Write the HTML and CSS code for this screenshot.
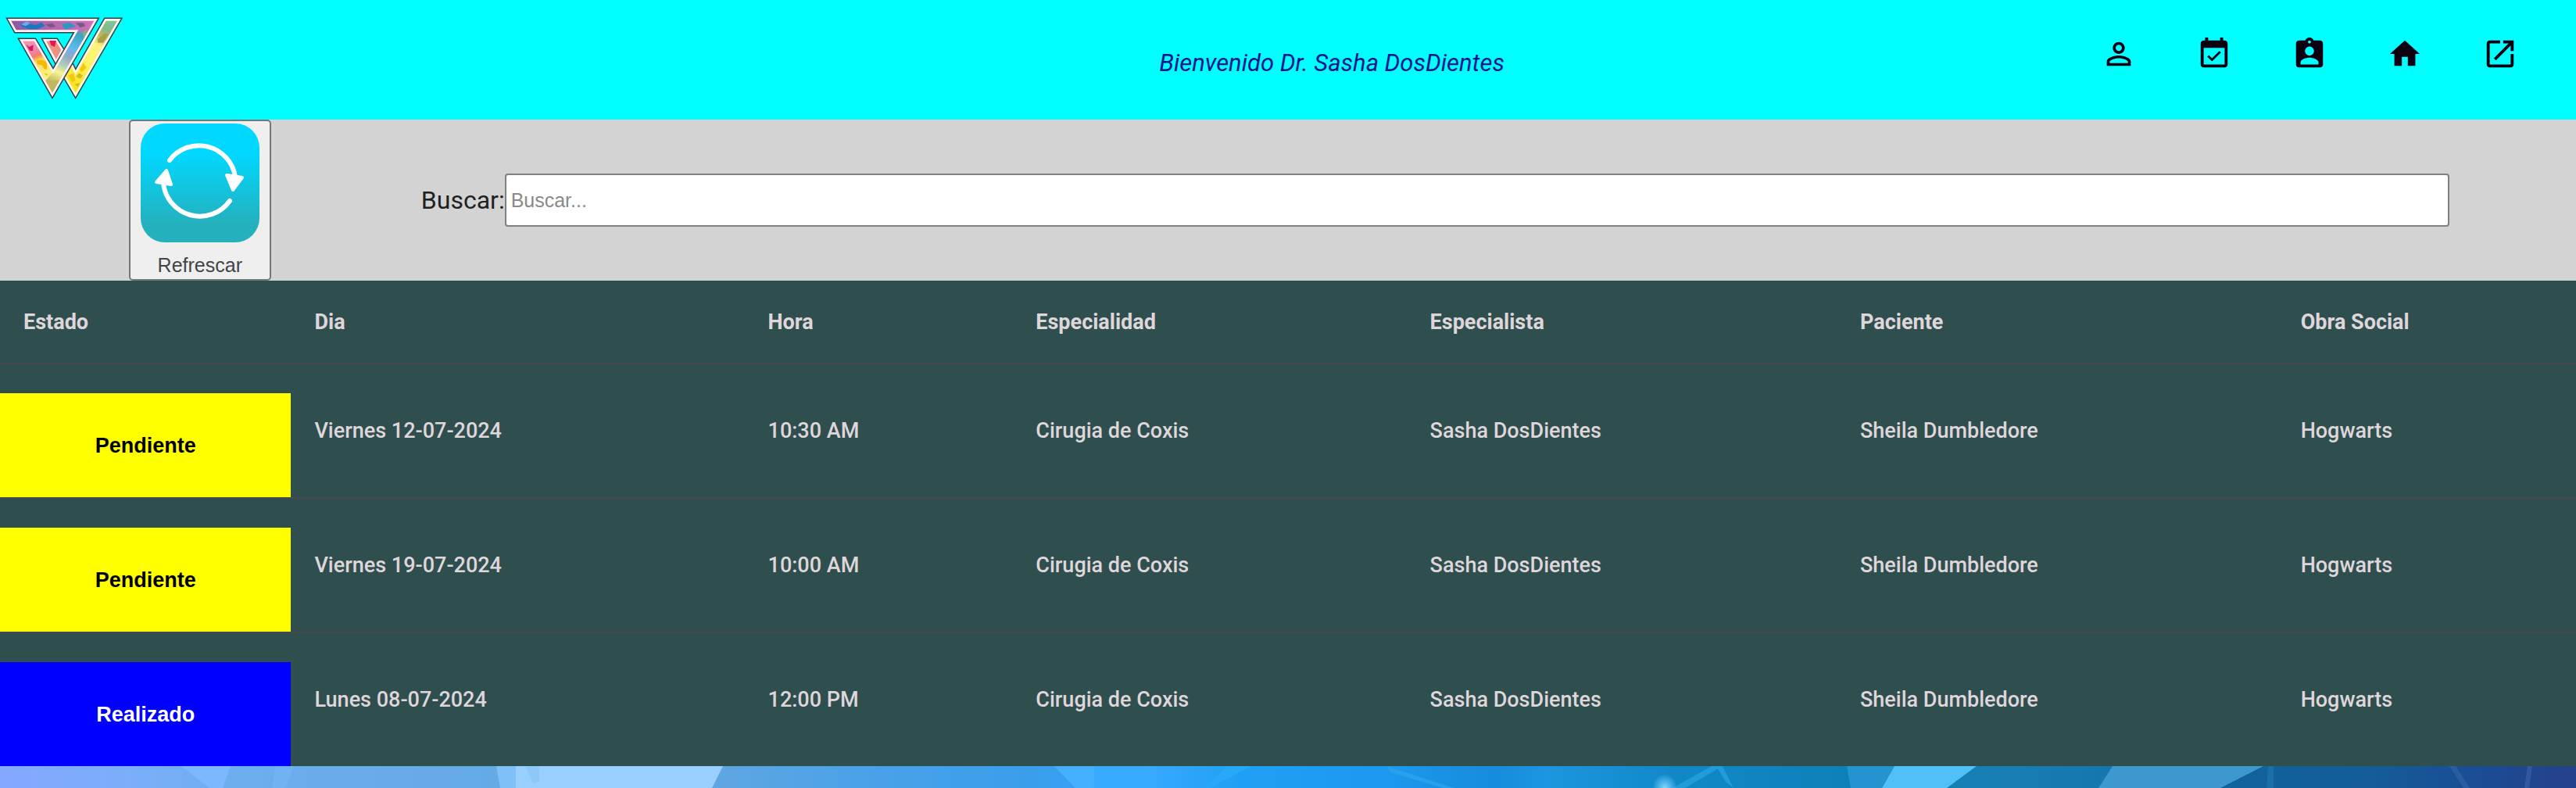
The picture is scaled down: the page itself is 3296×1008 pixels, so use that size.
FILE: index.html
```html
<!DOCTYPE html>
<html lang="es">
<head>
<meta charset="utf-8">
<meta name="viewport" content="width=device-width, initial-scale=1">
<title>Turnos</title>
<link rel="stylesheet" href="styles.css">
</head>
<body>
<header class="topbar">
  <a class="logo" href="#" aria-label="Inicio">
    <svg viewBox="0 0 480 456" width="160" height="152" aria-hidden="true">
      <defs>
        <linearGradient id="wDiag" gradientUnits="userSpaceOnUse" x1="330" y1="76" x2="201" y2="364">
          <stop offset="0" stop-color="#c86cb4"/><stop offset=".12" stop-color="#b878b8"/><stop offset=".2" stop-color="#38a8c0"/><stop offset=".38" stop-color="#60b8f0"/><stop offset=".5" stop-color="#90a8c8"/><stop offset=".62" stop-color="#b0d0b8"/><stop offset=".72" stop-color="#f8f490"/><stop offset=".86" stop-color="#c0b860"/><stop offset="1" stop-color="#d8c050"/>
        </linearGradient>
        <linearGradient id="wRight" gradientUnits="userSpaceOnUse" x1="440" y1="76" x2="290" y2="364">
          <stop offset="0" stop-color="#78c8a8"/><stop offset=".15" stop-color="#88b888"/><stop offset=".24" stop-color="#c0b860"/><stop offset=".36" stop-color="#fcf480"/><stop offset=".6" stop-color="#fcf460"/><stop offset="1" stop-color="#f8e010"/>
        </linearGradient>
        <linearGradient id="wLeft" gradientUnits="userSpaceOnUse" x1="100" y1="150" x2="150" y2="290">
          <stop offset="0" stop-color="#f898b8"/><stop offset=".4" stop-color="#f080a0"/><stop offset=".5" stop-color="#f08068"/><stop offset=".62" stop-color="#fcd850"/><stop offset="1" stop-color="#fcf080"/>
        </linearGradient>
        <linearGradient id="wTop" gradientUnits="userSpaceOnUse" x1="36" y1="0" x2="368" y2="0">
          <stop offset="0" stop-color="#8858a0"/><stop offset=".5" stop-color="#b468ac"/><stop offset="1" stop-color="#d070bc"/>
        </linearGradient>
        <clipPath id="wClip"><path d="M36 76H368L201 364 81 154H133L204 275 294 119H60ZM405 76H457L290 364 252 300 279 254 290 279Z"/></clipPath>
      </defs>
      <g fill="none" stroke="#33404a" stroke-width="17">
        <path d="M171 154H216L240 192 215 236Z"/>
        <path d="M405 76H457L290 364 247 290 274 246 290 279Z"/>
      </g>
      <path d="M171 154H216L240 192 215 236Z" fill="#f09080" stroke="#fff0f4" stroke-width="8"/>
      <path d="M190 156h26l-6 24-14-6z" fill="#e01858"/>
      <path d="M405 76H457L290 364 247 290 274 246 290 279Z" fill="url(#wRight)" stroke="#fff8e8" stroke-width="8"/>
      <path d="M36 76H368L201 364 81 154H133L204 275 294 119H60Z" fill="none" stroke="#33404a" stroke-width="17"/>
      <path d="M36 76H368L201 364 81 154H133L204 275 294 119H60Z" fill="url(#wDiag)"/>
      <path d="M36 76H368L343 119H60Z" fill="url(#wTop)"/>
      <path d="M81 154H133L204 275 172 313Z" fill="url(#wLeft)"/>
      <g clip-path="url(#wClip)">
        <path d="M76 96q18-18 42-4l20 4 22-10 12 14-28 12-30 0-24-8z" fill="#1878c0"/>
        <path d="M82 94q22-20 34-4l-18 10z" fill="#70a8e8"/>
        <path d="M174 94l28-4 12 12-22 4z" fill="#785888"/>
        <path d="M236 92l32-6 24 16-30 8-14 2z" fill="#3098c0"/>
        <path d="M290 88l30 0 8 12-20 6z" fill="#706080"/>
        <path d="M318 122l14-10 2 32-14-4z" fill="#80b080"/>
        <path d="M100 170l12 10 16-8-2 24-12-2z" fill="#d01860"/>
        <path d="M140 234q28-10 40 8v26q-18-4-16-16l-20-6z" fill="#f4b808"/>
        <path d="M170 280l14 4-6 8z" fill="#f4b808"/>
        <path d="M176 308h54l-29 56z" fill="#c0b860"/>
        <path d="M374 150l26-20 16 0-20 34-20 0z" fill="#a8a048"/>
        <path d="M306 268l14-28 12 20-20 18zM262 290l20-10 8 30-14 6z" fill="#f4c810"/>
        <path d="M292 294l12-14 14 10-10 12zM286 324l20-6-6 16z" fill="#d0b828"/>
      </g>
      <path d="M36 76H368L201 364 81 154H133L204 275 294 119H60Z" fill="none" stroke="#fff0f4" stroke-width="8"/>
    </svg>
  </a>
  <p class="welcome">Bienvenido Dr. Sasha DosDientes</p>
  <nav class="nav" aria-label="Principal">
    <a href="#" aria-label="Perfil"><svg viewBox="0 0 24 24"><path d="M12 5.900c1.160 0 2.100.940 2.100 2.100s-.940 2.100-2.100 2.100S9.900 9.160 9.900 8s.940-2.100 2.100-2.100m0 9c2.970 0 6.100 1.460 6.100 2.100v1.100H5.900V17c0-.640 3.130-2.100 6.100-2.100M12 4C9.790 4 8 5.790 8 8s1.790 4 4 4 4-1.790 4-4-1.790-4-4-4zm0 9c-2.670 0-8 1.340-8 4v3h16v-3c0-2.660-5.330-4-8-4z"/></svg></a>
    <a href="#" aria-label="Turnos"><svg viewBox="0 0 24 24"><path d="M16.530 11.060L15.470 10l-4.880 4.880-2.120-2.120-1.060 1.060L10.590 17l5.940-5.940zM19 3h-1V1h-2v2H8V1H6v2H5c-1.110 0-1.990.9-1.990 2L3 19c0 1.100.89 2 2 2h14c1.100 0 2-.9 2-2V5c0-1.100-.9-2-2-2zm0 16H5V8h14v11z"/></svg></a>
    <a href="#" aria-label="Pacientes"><svg viewBox="0 0 24 24"><path d="M19 3h-4.180C14.400 1.840 13.300 1 12 1c-1.300 0-2.400.84-2.820 2H5c-1.100 0-2 .9-2 2v14c0 1.100.9 2 2 2h14c1.100 0 2-.9 2-2V5c0-1.100-.9-2-2-2zm-7 0c.55 0 1 .45 1 1s-.45 1-1 1-1-.45-1-1 .45-1 1-1zm0 4c1.660 0 3 1.340 3 3s-1.340 3-3 3-3-1.340-3-3 1.340-3 3-3zm6 12H6v-1.400c0-2 4-3.100 6-3.100s6 1.100 6 3.100V19z"/></svg></a>
    <a href="#" aria-label="Inicio"><svg viewBox="0 0 24 24"><path d="M10 20v-6h4v6h5v-8h3L12 3 2 12h3v8z"/></svg></a>
    <a href="#" aria-label="Salir"><svg viewBox="0 0 24 24"><path d="M19 19H5V5h7V3H5c-1.110 0-2 .9-2 2v14c0 1.100.89 2 2 2h14c1.100 0 2-.9 2-2v-7h-2v7zM14 3v2h3.590l-9.830 9.830 1.410 1.410L19 6.410V10h2V3h-7z"/></svg></a>
  </nav>
</header>

<main class="content">
  <div class="toolbar">
    <button class="refresh" type="button">
      <svg viewBox="0 0 152 152" width="152" height="152" aria-hidden="true">
        <defs><linearGradient id="refreshBg" x1="0" y1="0" x2="0" y2="1"><stop offset=".25" stop-color="#00d8ff"/><stop offset=".85" stop-color="#24b0bc"/></linearGradient></defs>
        <rect width="152" height="152" rx="31" fill="url(#refreshBg)"/>
        <g fill="none" stroke="#fff" stroke-width="6" stroke-linecap="round">
          <path d="M37 47A47 47 0 0 1 121 68"/>
          <path d="M114 99A47 47 0 0 1 29 76"/>
        </g>
        <g fill="#fff" stroke="#fff" stroke-width="4" stroke-linejoin="round">
          <path d="M110 66L130 69 118 85Z"/>
          <path d="M33 60L20 75 39 78Z"/>
        </g>
      </svg>
      <span>Refrescar</span>
    </button>
    <form class="search">
      <label for="buscar">Buscar:</label>
      <input id="buscar" type="text" placeholder="Buscar...">
    </form>
  </div>

  <table class="turnos">
    <colgroup>
      <col class="c-estado"><col class="c-dia"><col class="c-hora"><col class="c-especialidad"><col class="c-especialista"><col class="c-paciente"><col class="c-obra">
    </colgroup>
    <thead>
      <tr><th>Estado</th><th>Dia</th><th>Hora</th><th>Especialidad</th><th>Especialista</th><th>Paciente</th><th>Obra Social</th></tr>
    </thead>
    <tbody>
      <tr><td class="estado"><div class="badge pendiente">Pendiente</div></td><td>Viernes 12-07-2024</td><td>10:30 AM</td><td>Cirugia de Coxis</td><td>Sasha DosDientes</td><td>Sheila Dumbledore</td><td>Hogwarts</td></tr>
      <tr><td class="estado"><div class="badge pendiente">Pendiente</div></td><td>Viernes 19-07-2024</td><td>10:00 AM</td><td>Cirugia de Coxis</td><td>Sasha DosDientes</td><td>Sheila Dumbledore</td><td>Hogwarts</td></tr>
      <tr><td class="estado"><div class="badge realizado">Realizado</div></td><td>Lunes 08-07-2024</td><td>12:00 PM</td><td>Cirugia de Coxis</td><td>Sasha DosDientes</td><td>Sheila Dumbledore</td><td>Hogwarts</td></tr>
    </tbody>
  </table>
</main>

<div class="backdrop" aria-hidden="true">
  <svg viewBox="0 0 3296 28" preserveAspectRatio="none">
    <defs>
      <linearGradient id="sky" gradientUnits="userSpaceOnUse" x1="0" y1="0" x2="3296" y2="0">
        <stop offset="0" stop-color="#84a8ff"/><stop offset=".055" stop-color="#7aaefa"/><stop offset=".09" stop-color="#6caeee"/><stop offset=".19" stop-color="#64aae6"/><stop offset=".28" stop-color="#5ea6e2"/><stop offset=".33" stop-color="#4ca2e8"/><stop offset=".4" stop-color="#3a9eec"/><stop offset=".45" stop-color="#34a8ff"/><stop offset=".48" stop-color="#20a0f4"/><stop offset=".54" stop-color="#1c98ee"/><stop offset=".58" stop-color="#168cdc"/><stop offset=".6" stop-color="#1c96e0"/><stop offset=".65" stop-color="#1088c8"/><stop offset=".72" stop-color="#0e80b8"/><stop offset=".78" stop-color="#187eb4"/><stop offset=".83" stop-color="#1474ac"/><stop offset=".86" stop-color="#10649c"/><stop offset=".92" stop-color="#145c9a"/><stop offset=".96" stop-color="#1a4e94"/><stop offset="1" stop-color="#24408c"/>
      </linearGradient>
      <radialGradient id="glow"><stop offset="0" stop-color="#7cd8ff"/><stop offset="1" stop-color="#7cd8ff" stop-opacity="0"/></radialGradient>
    </defs>
    <path d="M0 0H3296V28H0Z" fill="url(#sky)"/>
    <path d="M232 0H295L285 28H268Z" fill="#7cb8ff"/>
    <path d="M352 0H376L366 28H348Z" fill="#70b2f2"/>
    <path d="M635 0H662V28H640Z" fill="#80c0f8"/>
    <path d="M660 0H925L911 28H660Z" fill="#9ad0ff"/>
    <path d="M672 0H690V20L682 22Z" fill="#8ec8f8"/>
    <path d="M1349 0H1400V28H1376Z" fill="#44b0ff"/>
    <path d="M1400 0H1480V28H1400Z" fill="#38aaff"/>
    <path d="M1540 28L1562 8 1570 0H1600L1548 28Z" fill="#28a8f8"/>
    <path d="M1774 0L1860 28H1846L1780 8Z" fill="#28a0ec"/>
    <path d="M2140 28L2190 0H2204L2156 28Z" fill="#209cd8"/>
    <ellipse cx="2130" cy="28" rx="16" ry="18" fill="url(#glow)"/>
    <path d="M2196 0L2208 20 2218 28 2204 0Z" fill="#209cd8"/>
    <path d="M2363 0H2424L2408 28H2368Z" fill="#2494d0"/>
    <path d="M2424 0H2529L2491 28H2408Z" fill="#50c0f8"/>
    <path d="M2703 0H2896L2841 28H2685Z" fill="#3e98d0"/>
    <path d="M2902 0H2909V28H2900Z" fill="#1c70a8"/>
    <path d="M3134 0H3142L3160 28H3152Z" fill="#2c5ca0"/>
    <path d="M3234 0H3240L3236 28H3230Z" fill="#3458a0"/>
  </svg>
</div>
</body>
</html>
```
FILE: styles.css
```css
*, *::before, *::after {
  box-sizing: border-box;
}

body {
  display: flex;
  flex-direction: column;
  min-height: 100vh;
  margin: 0;
  background: #fff;
  font-family: Roboto, "Liberation Sans", sans-serif;
  font-size: 32px;
  color: #212121;
}

/* Header */
.topbar {
  display: grid;
  grid-template-columns: 45% auto 1fr;
  padding-bottom: 1px;
  background: aqua;
}

.logo {
  display: block;
  justify-self: start;
}

.logo svg {
  display: block;
}

.welcome {
  align-self: center;
  margin: 0;
  padding-top: 8px;
  font-size: 31px;
  font-style: italic;
  color: #001490;
}

.nav {
  display: flex;
  justify-self: end;
  padding: 46px 36px 0 0;
}

.nav a {
  padding: 0 38px;
  color: #0c0010;
}

.nav svg {
  display: block;
  width: 46px;
  height: 46px;
  fill: currentColor;
}

/* Toolbar */
.toolbar {
  display: flex;
  align-items: center;
  gap: 192px;
  padding: 0 162px 0 5%;
  background: lightgray;
}

.refresh {
  display: flex;
  flex-direction: column;
  align-items: center;
  gap: 12px;
  width: 182px;
  padding: 3px 12px 1px;
  border: 2px solid #767676;
  border-radius: 5px;
  background: #efefef;
  font-family: "Liberation Sans", sans-serif;
  font-size: 25px;
  line-height: 34px;
  color: #444;
}

.refresh svg {
  display: block;
}

.search {
  display: flex;
  flex: 1;
  align-items: center;
}

.search input {
  flex: 1;
  min-width: 0;
  height: 68px;
  padding: 2px 6px;
  border: 2px solid #808080;
  border-radius: 4px;
  background: #fff;
  font-family: "Liberation Sans", sans-serif;
  font-size: 25px;
}

.search input::placeholder {
  color: #8a8a8a;
}

/* Appointments */
.turnos {
  width: 100%;
  table-layout: fixed;
  border-collapse: collapse;
  background: darkslategray;
  color: #dfd6da;
  font-size: 27px;
  line-height: 36px;
}

.c-estado { width: 11.3%; }
.c-dia { width: 17.6%; }
.c-hora { width: 10.4%; }
.c-especialidad { width: 15.3%; }
.c-especialista { width: 16.7%; }
.c-paciente { width: 17.1%; }
.c-obra { width: 11.6%; }

.turnos th,
.turnos td {
  padding: 0 30px;
  text-align: left;
  vertical-align: middle;
  border-bottom: 2px solid #4a474f;
}

.turnos th {
  height: 106px;
  font-weight: 700;
}

.turnos td {
  font-weight: 500;
}

.turnos .estado {
  padding: 37px 0 0;
}

.turnos tbody tr:last-child td {
  border-bottom: 0;
}

.badge {
  display: flex;
  align-items: center;
  justify-content: center;
  height: 133px;
  font-family: "Liberation Sans", sans-serif;
  font-size: 27px;
  font-weight: 700;
}

.pendiente {
  background: yellow;
  color: #000;
}

.realizado {
  background: blue;
  color: #fff;
}

/* Backdrop below the table */
.backdrop {
  display: flex;
  flex: 1;
  min-height: 28px;
  border-bottom: 1px solid #fff;
}

.backdrop svg {
  flex: 1;
  width: 100%;
  height: auto;
}
```
